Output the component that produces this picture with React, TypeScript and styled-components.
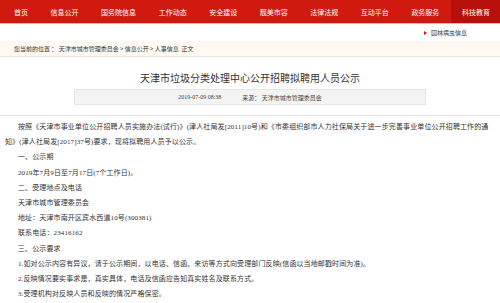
import React, { FC } from 'react';
import styled, { createGlobalStyle } from 'styled-components';

const GlobalStyle = createGlobalStyle`
  html, body {
    margin: 0;
    padding: 0;
    background: #fff;
  }
  body {
    width: 500px;
    height: 303px;
    overflow: hidden;
    font-family: 'Noto Sans CJK SC', sans-serif;
  }
`;

const Page = styled.div`
  width: 500px;
  display: flex;
  flex-direction: column;
`;

const NavBar = styled.ul`
  list-style: none;
  margin: 0;
  padding: 0 0 0 3px;
  height: 23px;
  display: flex;
  justify-content: space-between;
  background-color: #d01a10;
  border-bottom: 1px solid #f0b3ab;
`;

const NavItem = styled.li<{ active?: boolean }>`
  display: flex;
  align-items: center;
  padding: 0 10px 0 11px;
  font-size: 7px;
  color: #fff;
  background-color: ${({ active }) => (active ? '#b70f0a' : 'transparent')};
`;

const SubNav = styled.div`
  height: 17px;
  display: flex;
  align-items: center;
  justify-content: flex-end;
  padding-right: 33px;
  gap: 4px;
  font-size: 6px;
  color: #333;
`;

const Arrow = styled.span`
  width: 0;
  height: 0;
  border-top: 2px solid transparent;
  border-bottom: 2px solid transparent;
  border-left: 3px solid #d01a10;
`;

const Crumbs = styled.div`
  height: 15px;
  display: flex;
  align-items: center;
  padding-left: 14px;
  background-color: #fdf9f2;
  border-bottom: 1px solid #efe6da;
  font-size: 6px;
  color: #333;
  white-space: pre;
`;

const Title = styled.h1`
  margin: 14px 0 0;
  text-align: center;
  font-size: 10px;
  line-height: 14px;
  font-weight: 400;
  color: #333;
`;

const InfoBar = styled.div`
  margin: 4px auto 0;
  width: 350px;
  height: 14px;
  display: flex;
  align-items: center;
  justify-content: center;
  gap: 21px;
  background-color: #f3f3f3;
  border: 1px solid #e6e6e6;
  font-family: 'Liberation Serif', 'Noto Sans CJK SC', serif;
  font-size: 6px;
  color: #444;
`;

const Rule = styled.hr`
  margin: 10px 0 0;
  border: 0;
  border-top: 1px solid #e4e4e4;
`;

const Article = styled.div`
  padding: 4px 6px 0 5px;
  font-family: 'Liberation Serif', 'Noto Sans CJK SC', serif;
  font-size: 7px;
  letter-spacing: 0.12px;
  line-height: 15.2px;
  color: #333;
`;

const Para = styled.p`
  margin: 0;
  text-indent: 13px;
`;

const NAV = ['首页', '信息公开', '国务院信息', '工作动态', '安全建设', '靓美市容', '法律法规', '互动平台', '政务服务', '科技教育'];

const LINES = [
  '一、公示期',
  '2019年7月9日至7月17日(7个工作日)。',
  '二、受理地点及电话',
  '天津市城市管理委员会',
  '地址：天津市南开区宾水西道10号(300381)',
  '联系电话：23416162',
  '三、公示要求',
  '1.如对公示内容有异议，请于公示期间，以电话、信函、来访等方式向受理部门反映(信函以当地邮戳时间为准)。',
  '2.反映情况要实事求是，真实具体，电话及信函应告知真实姓名及联系方式。',
  '3.受理机构对反映人员和反映的情况严格保密。',
];

const App: FC = () => (
  <Page>
    <GlobalStyle />
    <NavBar>
      {NAV.map((item, i) => (
        <NavItem key={item} active={i === NAV.length - 1}>{item}</NavItem>
      ))}
    </NavBar>
    <SubNav>
      <Arrow />
      <span>园林病虫信息</span>
    </SubNav>
    <Crumbs>您当前的位置 ： 天津市城市管理委员会 &gt; 信息公开 &gt; 人事信息  正文</Crumbs>
    <Title>天津市垃圾分类处理中心公开招聘拟聘用人员公示</Title>
    <InfoBar>
      <span>2019-07-09 08:38</span>
      <span>来源：  天津市城市管理委员会</span>
    </InfoBar>
    <Rule />
    <Article>
      <Para>
        按照《天津市事业单位公开招聘人员实施办法(试行)》(津人社局发[2011]10号)和《市委组织部市人力社保局关于进一步完善事业单位公开招聘工作的通知》(津人社局发[2017]37号)要求，现将拟聘用人员予以公示。
      </Para>
      {LINES.map((line) => (
        <Para key={line}>{line}</Para>
      ))}
    </Article>
  </Page>
);

export default App;
